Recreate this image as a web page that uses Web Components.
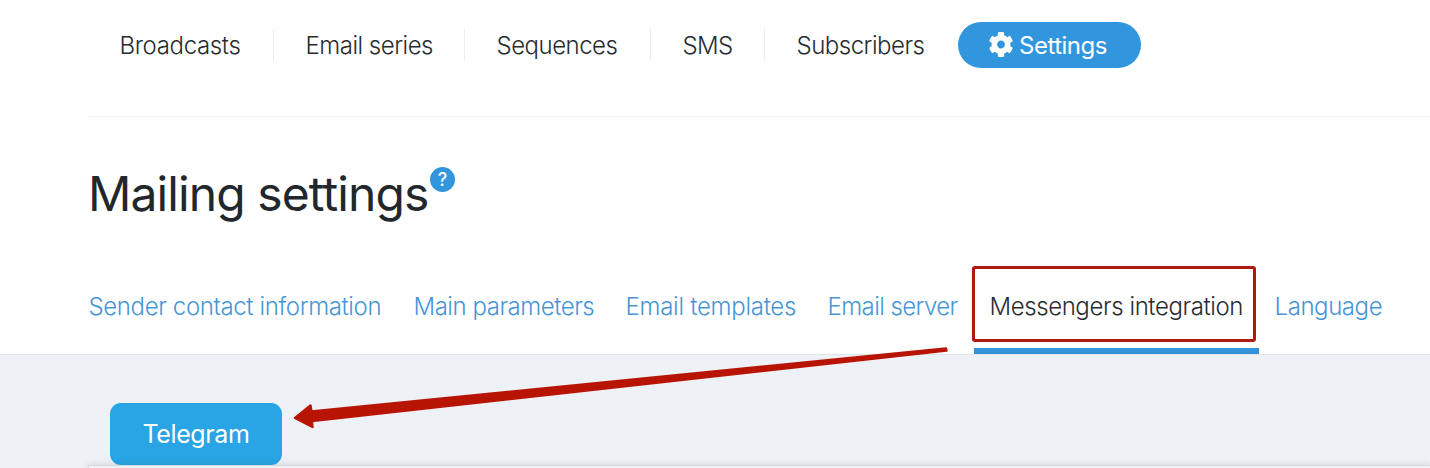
<!DOCTYPE html>
<html lang="en">
<head>
<meta charset="utf-8">
<title>Mailing settings</title>
<style>
    body {
        margin: 0;
        background: #fff;
        color: #272c31;
        font-family: Inter, "Liberation Sans", sans-serif;
        font-weight: 330;
    }
</style>
</head>
<body>
<mailing-page></mailing-page>
<script>
class NavItem extends HTMLElement {
    constructor() {
        super();
        this.attachShadow({ mode: 'open' });
    }

    connectedCallback() {
        this.shadowRoot.innerHTML = `
            <style>
                :host {
                    display: flex;
                    align-items: center;
                    height: 32px;
                    padding: 0 32.5px 0 31.5px;
                    border-right: 1px solid #e6edf3;
                    font-size: 24px;
                    white-space: nowrap;
                }
                :host([last]) { border-right: 0; }
                :host([active]) {
                    height: 46px;
                    padding: 0 31px;
                    border: 0;
                    border-radius: 23px;
                    background: #3196dd;
                    color: #fff;
                    font-weight: 400;
                    gap: 6.5px;
                }
                .text {
                    width: ${this.getAttribute('width')}px;
                    letter-spacing: ${this.getAttribute('spacing')}px;
                }
            </style>
            <slot name="icon"></slot>
            <span class="text"><slot></slot></span>
        `;
    }
}

class TabItem extends HTMLElement {
    constructor() {
        super();
        this.attachShadow({ mode: 'open' });
    }

    connectedCallback() {
        this.shadowRoot.innerHTML = `
            <style>
                :host {
                    position: relative;
                    display: flex;
                    justify-content: center;
                    box-sizing: border-box;
                    height: 88px;
                    padding: 26px 16.5px 0 15.5px;
                    border-bottom: 6px solid transparent;
                    color: #4796d5;
                    font-size: 24px;
                    line-height: 30px;
                    white-space: nowrap;
                }
                :host([active]) {
                    border-bottom-color: #3493d8;
                    color: #272c31;
                }
                .text {
                    width: ${this.getAttribute('width')}px;
                    letter-spacing: ${this.getAttribute('spacing')}px;
                }
                .frame { display: none; }
                :host([active]) .frame {
                    display: block;
                    position: absolute;
                    left: -2px;
                    top: 0;
                    width: 278px;
                    height: 70px;
                    border: 3.5px solid #b11a10;
                    border-radius: 3px;
                }
            </style>
            <span class="text"><slot></slot></span>
            <div class="frame"></div>
        `;
    }
}

class GearIcon extends HTMLElement {
    constructor() {
        super();
        this.attachShadow({ mode: 'open' });
    }

    connectedCallback() {
        this.shadowRoot.innerHTML = `
            <style>
                :host { display: block; width: 24px; height: 25px; margin-top: -2px; }
                svg { display: block; }
            </style>
            <svg width="24" height="25" viewBox="12 8 488 496" preserveAspectRatio="none" fill="#fff">
                <path d="M487.4 315.7l-42.6-24.6c4.3-23.2 4.3-47 0-70.2l42.6-24.6c4.9-2.8 7.1-8.6 5.5-14-11.1-35.6-30-67.8-54.7-94.6-3.8-4.1-10-5.1-14.8-2.3L380.8 110c-17.9-15.4-38.5-27.3-60.8-35.1V25.8c0-5.6-3.9-10.5-9.4-11.7-36.7-8.2-74.3-7.8-109.2 0-5.5 1.2-9.4 6.1-9.4 11.7V75c-22.2 7.9-42.8 19.8-60.8 35.1L88.7 85.5c-4.9-2.8-11-1.9-14.8 2.3-24.7 26.7-43.6 58.9-54.7 94.6-1.7 5.4.6 11.2 5.5 14L67.3 221c-4.3 23.2-4.3 47 0 70.2l-42.6 24.6c-4.9 2.8-7.1 8.6-5.5 14 11.1 35.6 30 67.8 54.7 94.6 3.8 4.1 10 5.1 14.8 2.3l42.6-24.6c17.9 15.4 38.5 27.3 60.8 35.1v49.2c0 5.6 3.9 10.5 9.4 11.7 36.7 8.2 74.3 7.8 109.2 0 5.5-1.2 9.4-6.1 9.4-11.7v-49.2c22.2-7.9 42.8-19.8 60.8-35.1l42.6 24.6c4.9 2.8 11 1.9 14.8-2.3 24.7-26.7 43.6-58.9 54.7-94.6 1.5-5.5-.7-11.3-5.6-14.1zM256 336c-44.1 0-80-35.9-80-80s35.9-80 80-80 80 35.9 80 80-35.9 80-80 80z"/>
            </svg>
        `;
    }
}

class HelpBadge extends HTMLElement {
    constructor() {
        super();
        this.attachShadow({ mode: 'open' });
    }

    connectedCallback() {
        this.shadowRoot.innerHTML = `
            <style>
                :host {
                    display: flex;
                    align-items: center;
                    justify-content: center;
                    width: 25px;
                    height: 25px;
                    border-radius: 50%;
                    background: #3196dd;
                    color: #fff;
                    font-size: 18px;
                    font-weight: 500;
                    line-height: 25px;
                }
            </style>
            <span>?</span>
        `;
    }
}

class ArrowPointer extends HTMLElement {
    constructor() {
        super();
        this.attachShadow({ mode: 'open' });
    }

    connectedCallback() {
        this.shadowRoot.innerHTML = `
            <style>
                :host {
                    position: absolute;
                    left: 290px;
                    top: 340px;
                    pointer-events: none;
                }
                svg { display: block; }
            </style>
            <svg width="664" height="96" viewBox="290 340 664 96">
                <path d="M295 418 L310.500 405.500 L311.500 411.500 L946 348.500 L946.500 350.500 L312 421 L312.500 427 Z"
                    fill="#b81404" stroke="#b81404" stroke-width="2.400" stroke-linejoin="round"/>
            </svg>
        `;
    }
}

class MessengerPanel extends HTMLElement {
    constructor() {
        super();
        this.attachShadow({ mode: 'open' });
    }

    connectedCallback() {
        this.shadowRoot.innerHTML = `
            <style>
                :host {
                    display: flex;
                    flex-direction: column;
                    box-sizing: border-box;
                    height: 114px;
                    padding-top: 48px;
                    border-top: 1px solid #dfe4e8;
                    background: #eef1f6;
                    overflow: hidden;
                }
                .button {
                    display: flex;
                    align-items: center;
                    justify-content: center;
                    box-sizing: border-box;
                    flex: none;
                    width: 172px;
                    height: 62px;
                    margin-left: 110px;
                    border-radius: 11px;
                    background: #29a4e4;
                    color: #fff;
                    font-size: 25px;
                    font-weight: 400;
                    letter-spacing: -0.4px;
                }
                .card {
                    flex: none;
                    height: 20px;
                    margin-left: 88px;
                    border-top: 1px solid #d5dadf;
                    border-left: 1px solid #d5dadf;
                    background: #eef1f6;
                    box-shadow: 0 0 7px rgba(60, 80, 100, 0.18);
                }
            </style>
            <div class="button"><slot></slot></div>
            <div class="card"></div>
        `;
    }
}

class MailingPage extends HTMLElement {
    constructor() {
        super();
        this.attachShadow({ mode: 'open' });
    }

    connectedCallback() {
        this.shadowRoot.innerHTML = `
            <style>
                :host {
                    display: block;
                    position: relative;
                    height: 468px;
                    overflow: hidden;
                }
                nav {
                    display: flex;
                    align-items: center;
                    box-sizing: border-box;
                    height: 117px;
                    margin-left: 88px;
                    padding-bottom: 26px;
                    border-bottom: 1px solid #eff1f2;
                }
                .title {
                    display: flex;
                    align-items: flex-start;
                    height: 149px;
                    padding-left: 88px;
                }
                h1 {
                    width: 342px;
                    margin: 47px 0 0;
                    font-size: 48px;
                    font-weight: 380;
                    line-height: 60px;
                    letter-spacing: -0.9px;
                    white-space: nowrap;
                    color: #22272b;
                }
                help-badge { margin-top: 50px; }
                .tabs {
                    display: flex;
                    padding-left: 73px;
                }
            </style>
            <nav>
                <nav-item width="121" spacing="-0.35">Broadcasts</nav-item>
                <nav-item width="126" spacing="-0.5">Email series</nav-item>
                <nav-item width="121" spacing="-0.5">Sequences</nav-item>
                <nav-item width="49" spacing="-0.6">SMS</nav-item>
                <nav-item width="128.5" spacing="-0.5" last>Subscribers</nav-item>
                <nav-item width="91" spacing="-0.5" active><gear-icon slot="icon"></gear-icon>Settings</nav-item>
            </nav>
            <div class="title">
                <h1>Mailing settings</h1>
                <help-badge></help-badge>
            </div>
            <div class="tabs">
                <tab-item width="293" spacing="-0.37">Sender contact information</tab-item>
                <tab-item width="180" spacing="-0.46">Main parameters</tab-item>
                <tab-item width="170" spacing="-0.27">Email templates</tab-item>
                <tab-item width="130" spacing="-0.58">Email server</tab-item>
                <tab-item width="253" spacing="-0.41" active>Messengers integration</tab-item>
                <tab-item width="108" spacing="-0.42">Language</tab-item>
            </div>
            <messenger-panel>Telegram</messenger-panel>
            <arrow-pointer></arrow-pointer>
        `;
    }
}

customElements.define('nav-item', NavItem);
customElements.define('tab-item', TabItem);
customElements.define('gear-icon', GearIcon);
customElements.define('help-badge', HelpBadge);
customElements.define('arrow-pointer', ArrowPointer);
customElements.define('messenger-panel', MessengerPanel);
customElements.define('mailing-page', MailingPage);
</script>
</body>
</html>
